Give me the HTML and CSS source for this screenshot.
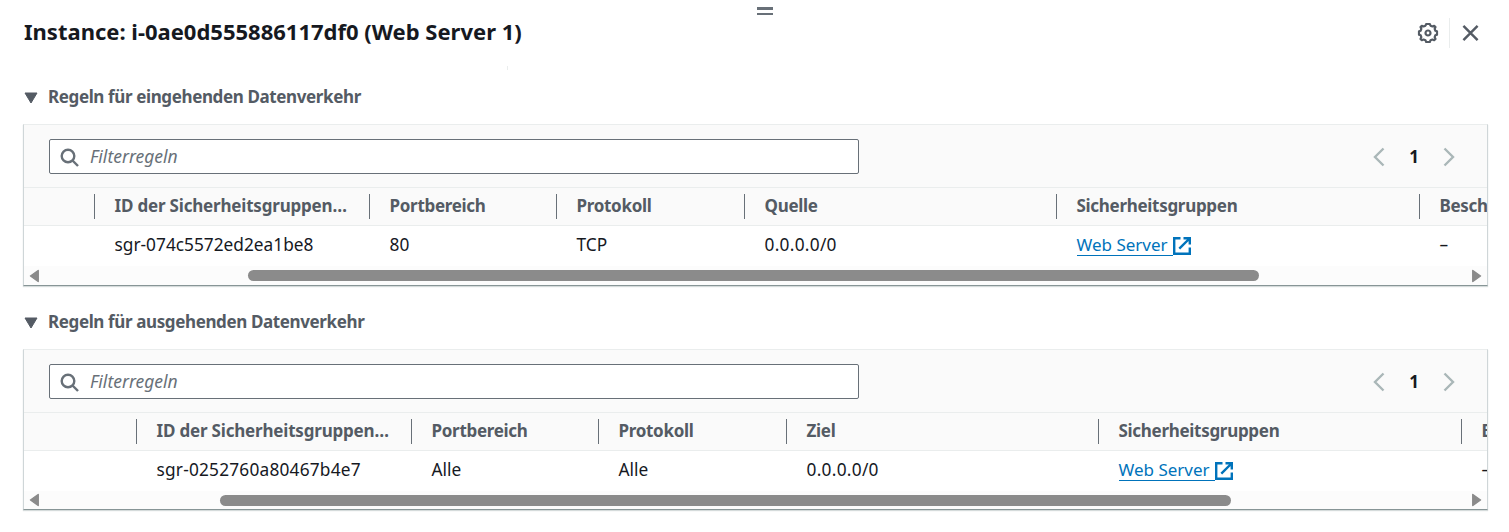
FILE: index.html
```
<!DOCTYPE html>
<html lang="de">
<head>
<meta charset="utf-8">
<title>Instance: i-0ae0d555886117df0 (Web Server 1)</title>
<link rel="stylesheet" href="styles.css">
</head>
<body>
<svg class="defs" width="0" height="0" aria-hidden="true">
  <symbol id="search" viewBox="0 0 20 20"><circle cx="8" cy="8" r="6.3"/><path d="M12.5 12.5 18 18"/></symbol>
  <symbol id="left" viewBox="0 0 12 20"><path d="M10.5 1.500 2 10l8.500 8.500"/></symbol>
  <symbol id="right" viewBox="0 0 12 20"><path d="M1.500 1.500 10 10l-8.500 8.500"/></symbol>
  <symbol id="external" viewBox="0 0 18 18"><path d="M7.500 1.200H1.200v15.600h15.600v-6.300M10.500 1.200h6.300v6.300M16.500 1.500 6.300 11.700"/></symbol>
</svg>
<div class="handle"><i></i><i></i></div>
<header class="header">
  <h1 class="title">Instance: i-0ae0d555886117df0 (Web Server 1)</h1>
  <div class="actions">
    <svg class="gear" width="22" height="22" viewBox="-11 -11 22 22"><path d="M-1.800-9H1.800L2.500-7.300 4.500-6.500 6.200-7.200 7.500-6 6.700-4.200 7.300-2.300 9-1.700V1.700L7.300 2.300 6.700 4.200 7.500 6 6.200 7.200 4.500 6.500 2.500 7.300 1.800 9H-1.800L-2.500 7.300-4.500 6.500-6.200 7.200-7.500 6-6.700 4.200-7.300 2.300-9 1.700V-1.700L-7.300-2.300-6.700-4.200-7.500-6-6.200-7.200-4.500-6.500-2.500-7.300Z"/><circle r="2.500"/></svg>
    <svg class="close" width="18" height="18" viewBox="0 0 18 18"><path d="m1.500 1.500 15 15m0-15-15 15"/></svg>
  </div>
</header>
<div class="tick"></div>

<section class="rules">
  <h2 class="section-title"><svg width="14" height="12" viewBox="0 0 14 12"><path d="M1 1h12L7 11Z"/></svg>Regeln für eingehenden Datenverkehr</h2>
  <div class="card">
    <div class="toolbar">
      <div class="search"><svg width="20" height="20"><use href="#search"/></svg><span>Filterregeln</span></div>
      <div class="pager"><svg width="12" height="20"><use href="#left"/></svg><b>1</b><svg width="12" height="20"><use href="#right"/></svg></div>
    </div>
    <div class="row head">
      <div></div><div class="long">ID der Sicherheitsgruppen…</div><div>Portbereich</div><div>Protokoll</div><div>Quelle</div><div>Sicherheitsgruppen</div><div>Beschreibung</div>
    </div>
    <div class="row body">
      <div></div><div>sgr-074c5572ed2ea1be8</div><div>80</div><div>TCP</div><div class="ip">0.0.0.0/0</div><div><a>Web Server</a><svg class="ext" width="18" height="18"><use href="#external"/></svg></div><div>–</div>
    </div>
    <div class="scroll">
      <svg width="11" height="14" viewBox="0 0 11 14"><path d="M9.200 1.500v11L1.500 7Z"/></svg>
      <div class="thumb"></div>
      <svg width="11" height="14" viewBox="0 0 11 14"><path d="M1.800 1.500v11L9.500 7Z"/></svg>
    </div>
  </div>
</section>

<section class="rules outbound">
  <h2 class="section-title"><svg width="14" height="12" viewBox="0 0 14 12"><path d="M1 1h12L7 11Z"/></svg>Regeln für ausgehenden Datenverkehr</h2>
  <div class="card">
    <div class="toolbar">
      <div class="search"><svg width="20" height="20"><use href="#search"/></svg><span>Filterregeln</span></div>
      <div class="pager"><svg width="12" height="20"><use href="#left"/></svg><b>1</b><svg width="12" height="20"><use href="#right"/></svg></div>
    </div>
    <div class="row head">
      <div></div><div class="long">ID der Sicherheitsgruppen…</div><div>Portbereich</div><div>Protokoll</div><div>Ziel</div><div>Sicherheitsgruppen</div><div>Beschreibung</div>
    </div>
    <div class="row body">
      <div></div><div class="id">sgr-0252760a80467b4e7</div><div>Alle</div><div>Alle</div><div class="ip">0.0.0.0/0</div><div><a>Web Server</a><svg class="ext" width="18" height="18"><use href="#external"/></svg></div><div>–</div>
    </div>
    <div class="scroll">
      <svg width="11" height="14" viewBox="0 0 11 14"><path d="M9.200 1.500v11L1.500 7Z"/></svg>
      <div class="thumb"></div>
      <svg width="11" height="14" viewBox="0 0 11 14"><path d="M1.800 1.500v11L9.500 7Z"/></svg>
    </div>
  </div>
</section>
</body>
</html>
```
FILE: styles.css
```
* { box-sizing: border-box; }
body {
  margin: 0;
  height: 532px;
  overflow: hidden;
  background: #fff;
  color: #16191f;
  font-family: "Noto Sans", "Open Sans", sans-serif;
  font-size: 17.3px;
}
svg { fill: none; stroke: currentColor; stroke-width: 2.4; flex: none; display: block; }
.defs { position: absolute; }
.handle { height: 16px; padding-top: 7px; display: flex; flex-direction: column; align-items: center; gap: 4px; padding-left: 21px; }
.handle i { width: 16px; height: 2px; background: #687078; }
.handle i:first-child { height: 3px; margin-bottom: -1px; }
.header { height: 50px; padding: 0 29px 0 24px; display: flex; justify-content: space-between; align-items: flex-start; }
.title { margin: 0; font-size: 22px; line-height: 30px; font-weight: 700; white-space: nowrap; }
.actions { display: flex; align-items: center; height: 30px; margin-top: 2px; color: #545b64; }
.gear { margin-right: 10px; stroke-width: 2.2; stroke-linejoin: round; }
.close { width: 31px; height: 30px; padding: 6px 1px 6px 12px; border-left: 1px solid #eaeded; stroke-width: 2.6; }
.tick { width: 1px; height: 4px; margin-left: 507px; background: #eaeded; }

.rules { padding: 15px 21px 0 23px; }
.section-title {
  margin: 0; height: 24px; display: flex; align-items: center; gap: 10px; padding: 0 0 2px 1px;
  font-size: 17px; letter-spacing: -.38px; color: #545b64;
}
.section-title svg { fill: currentColor; stroke-width: 1; stroke-linejoin: round; margin-top: 3px; }
.card {
  margin-top: 15px; height: 162px; overflow: hidden;
  border: 1px solid #cfd6d8; border-top-color: #eaeded; border-bottom-color: #879596;
  box-shadow: 0 1px 1px #d5dbdb;
}
.toolbar { height: 62px; padding: 14px 32px 0 25px; display: flex; justify-content: space-between; background: #fafafa; }
.search {
  width: 810px; height: 35px; display: flex; align-items: center; gap: 10px; padding-left: 10px;
  border: 1px solid #687078; border-radius: 2px; background: #fff; color: #687078;
}
.search svg { margin-top: 2px; }
.search span { font-size: 17.5px; font-style: italic; padding-bottom: 1px; }
.pager { height: 35px; display: flex; align-items: center; color: #aab7b8; }
.pager b { width: 58px; text-align: center; color: #16191f; font-size: 17px; padding-bottom: 1px; }

.row {
  --lead: 70px;
  display: grid; grid-template-columns: var(--lead) 275px 187px 188px 312px 363px 200px;
  align-items: center; white-space: nowrap;
}
.outbound .row { --lead: 112px; }
.row > div { padding-left: 19.5px; height: 25px; line-height: 23px; display: flex; border-left: 1px solid transparent; }
.head { height: 39px; background: #fafafa; border: solid #eaeded; border-width: 1px 0; font-size: 17px; font-weight: 700; letter-spacing: -.3px; color: #545b64; }
.head > div + div { border-left-color: #687078; }
.head .long { letter-spacing: -.19px; }
.body { height: 40px; }
.body > div { line-height: 21px; }
.body .ip { letter-spacing: .28px; }
.body .id { letter-spacing: .2px; }
.body a { color: #0073bb; height: 22px; border-bottom: 1px solid #0073bb; padding-right: 5px; font-size: 17px; }
.ext { color: #0073bb; margin-top: 3px; }
.scroll { height: 19px; padding: 0 5px; display: flex; align-items: center; justify-content: space-between; background: #fcfcfc; color: #8b8b8b; }
.scroll svg { fill: currentColor; stroke-width: 1.500; stroke-linejoin: round; }
.thumb { width: 1011px; height: 11px; margin-left: 208px; margin-right: auto; border-radius: 6px; background: #8b8b8b; }

.outbound { padding-top: 24px; }
.outbound .card { height: 161px; }
.outbound .scroll { height: 18px; }
.outbound .thumb { margin-left: 180px; }
```
